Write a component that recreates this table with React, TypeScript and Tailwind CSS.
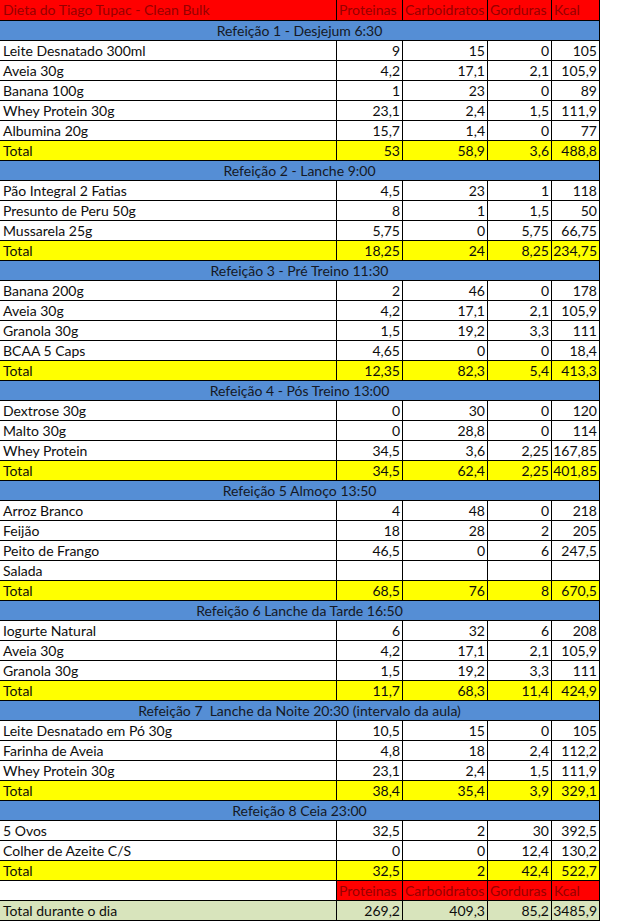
import React from 'react'

type Item = [string, string, string, string, string]

type Meal = {
  title: string
  items: Item[]
  total: [string, string, string, string]
}

const meals: Meal[] = [
  {
    title: 'Refeição 1 - Desjejum 6:30',
    items: [
      ['Leite Desnatado 300ml', '9', '15', '0', '105'],
      ['Aveia 30g', '4,2', '17,1', '2,1', '105,9'],
      ['Banana 100g', '1', '23', '0', '89'],
      ['Whey Protein 30g', '23,1', '2,4', '1,5', '111,9'],
      ['Albumina 20g', '15,7', '1,4', '0', '77'],
    ],
    total: ['53', '58,9', '3,6', '488,8'],
  },
  {
    title: 'Refeição 2 - Lanche 9:00',
    items: [
      ['Pão Integral 2 Fatias', '4,5', '23', '1', '118'],
      ['Presunto de Peru 50g', '8', '1', '1,5', '50'],
      ['Mussarela 25g', '5,75', '0', '5,75', '66,75'],
    ],
    total: ['18,25', '24', '8,25', '234,75'],
  },
  {
    title: 'Refeição 3 - Pré Treino 11:30',
    items: [
      ['Banana 200g', '2', '46', '0', '178'],
      ['Aveia 30g', '4,2', '17,1', '2,1', '105,9'],
      ['Granola 30g', '1,5', '19,2', '3,3', '111'],
      ['BCAA 5 Caps', '4,65', '0', '0', '18,4'],
    ],
    total: ['12,35', '82,3', '5,4', '413,3'],
  },
  {
    title: 'Refeição 4 - Pós Treino 13:00',
    items: [
      ['Dextrose 30g', '0', '30', '0', '120'],
      ['Malto 30g', '0', '28,8', '0', '114'],
      ['Whey Protein', '34,5', '3,6', '2,25', '167,85'],
    ],
    total: ['34,5', '62,4', '2,25', '401,85'],
  },
  {
    title: 'Refeição 5 Almoço 13:50',
    items: [
      ['Arroz Branco', '4', '48', '0', '218'],
      ['Feijão', '18', '28', '2', '205'],
      ['Peito de Frango', '46,5', '0', '6', '247,5'],
      ['Salada', '', '', '', ''],
    ],
    total: ['68,5', '76', '8', '670,5'],
  },
  {
    title: 'Refeição 6 Lanche da Tarde 16:50',
    items: [
      ['Iogurte Natural', '6', '32', '6', '208'],
      ['Aveia 30g', '4,2', '17,1', '2,1', '105,9'],
      ['Granola 30g', '1,5', '19,2', '3,3', '111'],
    ],
    total: ['11,7', '68,3', '11,4', '424,9'],
  },
  {
    title: 'Refeição 7\u00a0 Lanche da Noite 20:30 (intervalo da aula)',
    items: [
      ['Leite Desnatado em Pó 30g', '10,5', '15', '0', '105'],
      ['Farinha de Aveia', '4,8', '18', '2,4', '112,2'],
      ['Whey Protein 30g', '23,1', '2,4', '1,5', '111,9'],
    ],
    total: ['38,4', '35,4', '3,9', '329,1'],
  },
  {
    title: 'Refeição 8 Ceia 23:00',
    items: [
      ['5 Ovos', '32,5', '2', '30', '392,5'],
      ['Colher de Azeite C/S', '0', '0', '12,4', '130,2'],
    ],
    total: ['32,5', '2', '42,4', '522,7'],
  },
]

const heads = ['Proteinas', 'Carboidratos', 'Gorduras', 'Kcal']
const widths = ['w-[66px]', 'w-[85px]', 'w-[64px]', 'w-[48px]']

function Row({ label, values, bg }: { label: string; values: string[]; bg: string }) {
  return (
    <div className={`flex h-5 ${bg}`}>
      <div className="w-[337px] border-r border-b border-black pl-[3px] leading-[19px] whitespace-nowrap overflow-hidden">
        {label}
      </div>
      {values.map((v, i) => (
        <div key={i} className={`${widths[i]} border-r border-b border-black pr-[2px] text-right leading-[19px] whitespace-nowrap overflow-hidden`}>
          {v}
        </div>
      ))}
    </div>
  )
}

// red header cells, used at the top and again above the day total
function HeadCells() {
  return (
    <>
      {heads.map((h, i) => (
        <div key={h} className={`${widths[i]} bg-[#ff0000] text-[#960000] border-r border-b border-black pl-[2px] leading-[19px] whitespace-nowrap overflow-hidden`}>
          {h}
        </div>
      ))}
    </>
  )
}

export default function App() {
  return (
    <div className="w-[640px] h-[921px] bg-white overflow-hidden text-[14px] text-[#0d0d0d]" style={{ fontFamily: 'Lato, "Open Sans", sans-serif' }}>
      <div className="w-[600px]">
        <div className="flex h-[21px]">
          <div className="w-[337px] bg-[#ff0000] text-[#960000] border-r border-b border-black pl-[3px] leading-[20px] whitespace-nowrap">
            Dieta do Tiago Tupac - Clean Bulk
          </div>
          <HeadCells />
        </div>

        {meals.map((m) => (
          <React.Fragment key={m.title}>
            <div className="h-5 bg-[#558ed5] border-r border-b border-black text-center leading-[19px] text-[#141824] whitespace-nowrap">
              {m.title}
            </div>
            {m.items.map((it, i) => (
              <Row key={i} label={it[0]} values={it.slice(1)} bg="bg-white" />
            ))}
            <Row label="Total" values={m.total} bg="bg-[#ffff00]" />
          </React.Fragment>
        ))}

        <div className="flex h-5">
          <div className="w-[337px] bg-white border-r border-b border-black"></div>
          <HeadCells />
        </div>
        <Row label="Total durante o dia" values={['269,2', '409,3', '85,2', '3485,9']} bg="bg-[#d8e4bc]" />
      </div>
    </div>
  )
}
